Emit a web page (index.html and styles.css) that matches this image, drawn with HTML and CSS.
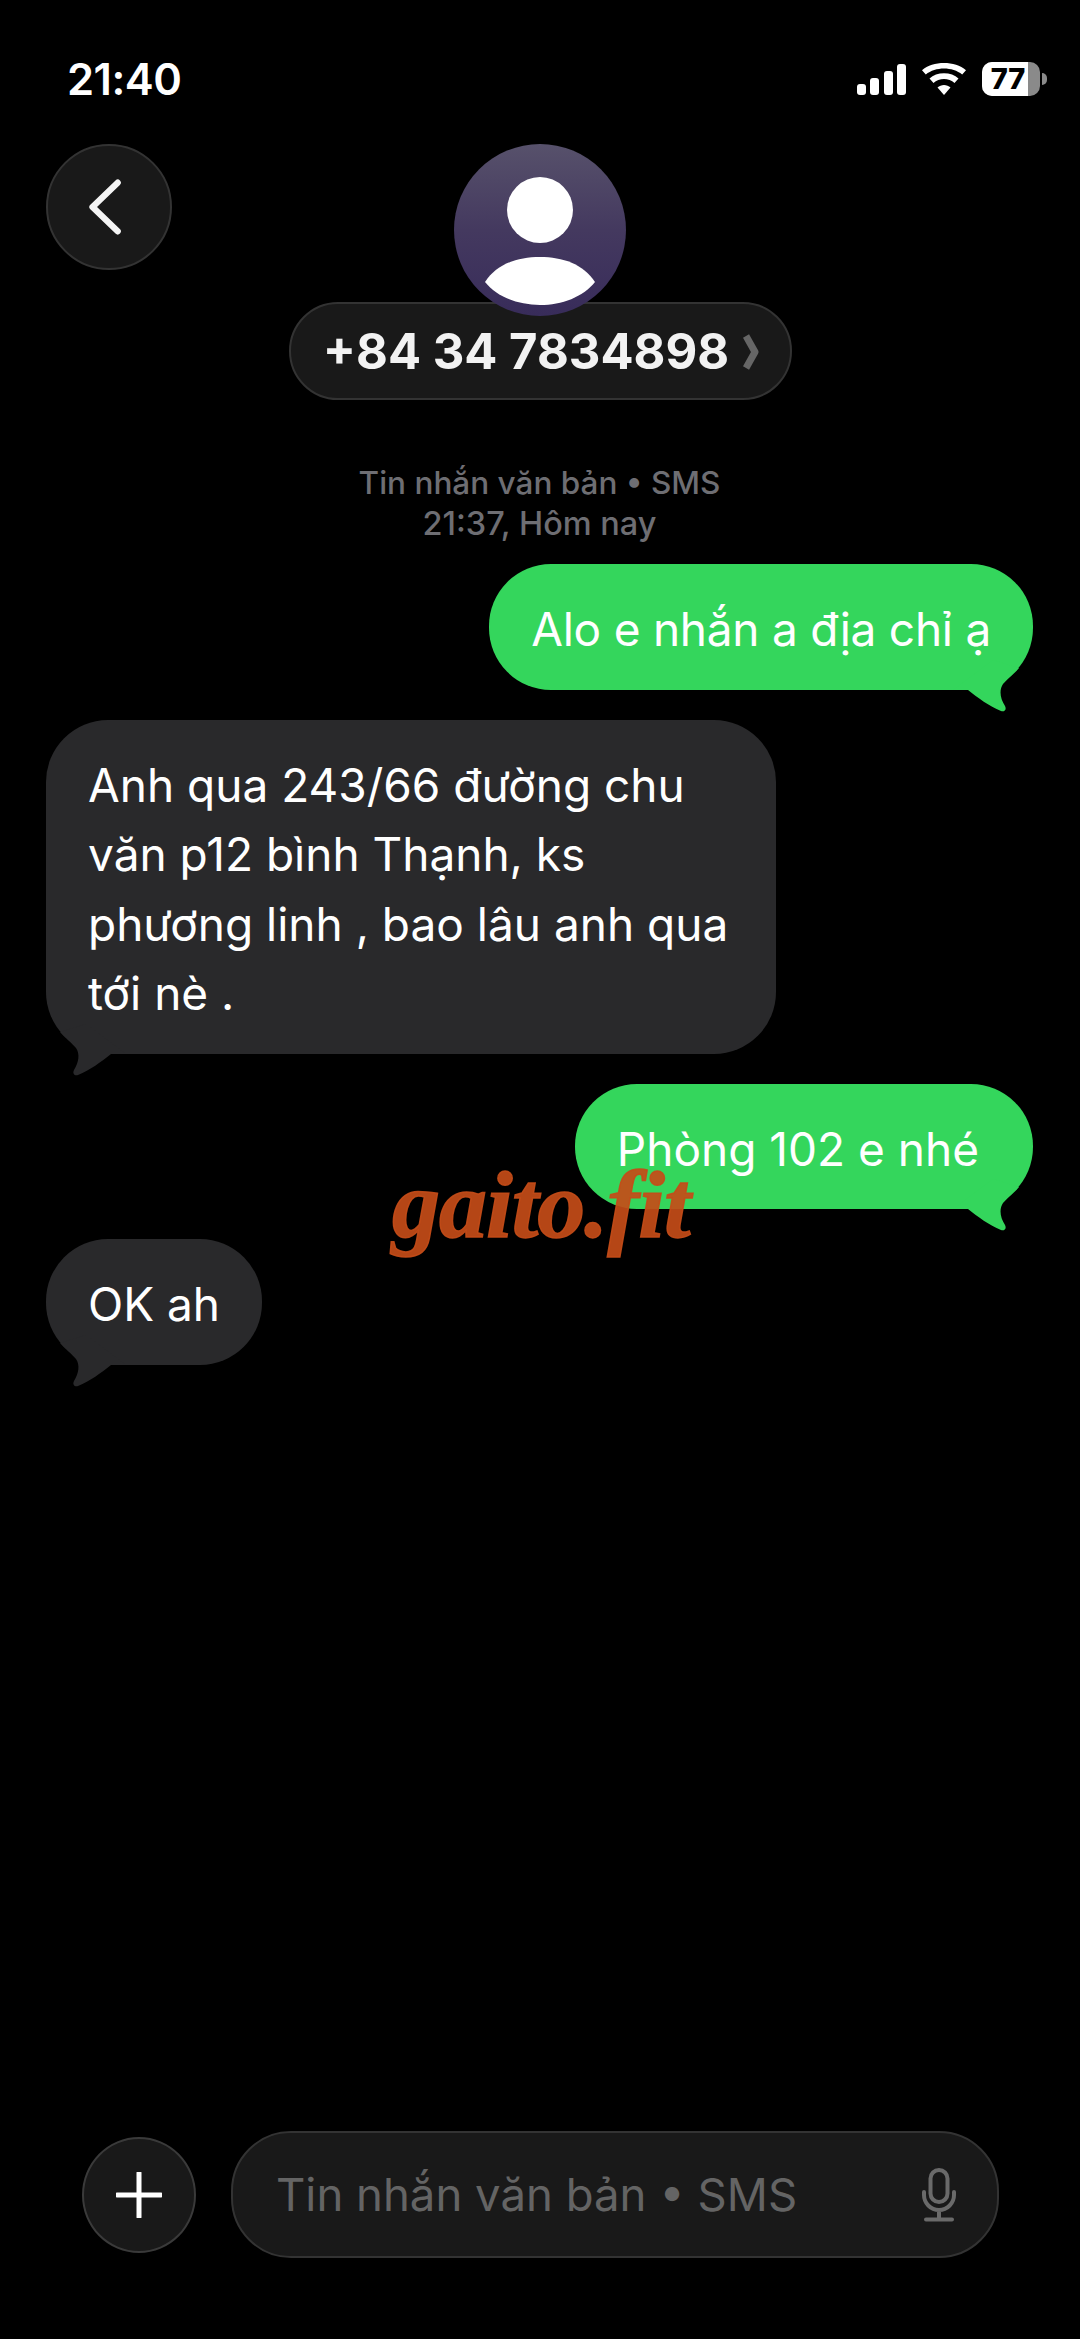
FILE: index.html
```html
<!DOCTYPE html>
<html lang="vi">
<head>
<meta charset="utf-8">
<title>SMS</title>
<link rel="stylesheet" href="styles.css">
</head>
<body>
<div class="screen">
  <header class="status">
    <span class="clock">21:40</span>
    <div class="status-icons">
      <svg class="signal" viewBox="0 0 49 31"><rect x="0" y="20" width="9" height="11" rx="3"/><rect x="13" y="14" width="9" height="17" rx="3"/><rect x="27" y="7" width="9" height="24" rx="3"/><rect x="40" y="0" width="9" height="31" rx="3"/></svg>
      <svg class="wifi" viewBox="0 0 44 32"><path d="M22 32 15.500 24.500C19 21 25 21 28.500 24.500Z"/><path d="M11.500 20 7.500 15.500C14.500 8.500 29.500 8.500 36.500 15.500L32.500 20C27 14.800 17 14.800 11.500 20Z"/><path d="M3.800 11.500 0 7.200C11 -2.400 33 -2.400 44 7.200L40.200 11.500C30.500 3.500 13.500 3.500 3.800 11.500Z"/></svg>
      <div class="battery"><div class="battery-body"><span class="battery-fill"></span><span class="battery-text">77</span></div><span class="battery-nub"></span></div>
    </div>
  </header>

  <nav class="nav">
    <button class="back" aria-label="Back">
      <svg viewBox="0 0 40 64" class="back-icon"><path d="M33 5 5 32l28 27"/></svg>
    </button>
    <div class="contact">
      <div class="avatar">
        <svg viewBox="0 0 172 172"><circle cx="86" cy="66" r="33"/><path d="M31 138C43 120 63 113 86 113s43 7 55 25C129 153 108 161 86 161s-43-8-55-23Z"/></svg>
      </div>
      <div class="name-pill">
        <span>+84 34 7834898</span>
        <svg class="pill-chevron" viewBox="0 0 16 36"><path d="M3 2 12 18 3 34"/></svg>
      </div>
    </div>
  </nav>

  <main class="thread">
    <p class="caption">Tin nhắn văn bản • SMS<br><span class="caption-time">21:37, Hôm nay</span></p>
    <div class="bubble sent tight">Alo e nhắn a địa chỉ ạ<svg class="tail" viewBox="-80 -40 80 64"><path d="M-80 0H-65C-55 8-44 16-32 21-29 22-26 20-28 16-33 8-34 0-30-6-26-11-20-15-14-22L-40-30Z"/></svg></div>
    <div class="bubble received wide">Anh qua 243/66 đường chu văn p12 bình Thạnh, ks phương linh , bao lâu anh qua tới nè .<svg class="tail" viewBox="-80 -40 80 64"><path d="M-80 0H-65C-55 8-44 16-32 21-29 22-26 20-28 16-33 8-34 0-30-6-26-11-20-15-14-22L-40-30Z"/></svg></div>
    <div class="bubble sent roomy">Phòng 102 e nhé<svg class="tail" viewBox="-80 -40 80 64"><path d="M-80 0H-65C-55 8-44 16-32 21-29 22-26 20-28 16-33 8-34 0-30-6-26-11-20-15-14-22L-40-30Z"/></svg></div>
    <div class="bubble received">OK ah<svg class="tail" viewBox="-80 -40 80 64"><path d="M-80 0H-65C-55 8-44 16-32 21-29 22-26 20-28 16-33 8-34 0-30-6-26-11-20-15-14-22L-40-30Z"/></svg></div>
    <span class="watermark">gaito.fit</span>
  </main>

  <footer class="composer">
    <button class="plus" aria-label="Add">
      <svg viewBox="0 0 46 46"><path d="M23 1v44M1 23h44"/></svg>
    </button>
    <div class="field">
      <span class="placeholder">Tin nhắn văn bản • SMS</span>
      <svg class="mic" viewBox="0 0 36 54"><rect x="9.500" y="2" width="17" height="32" rx="8.500"/><path d="M3 24v3c0 8 6.500 15 15 15s15-7 15-15v-3M18 42v9M5 51.500h26"/></svg>
    </div>
  </footer>
</div>
</body>
</html>
```

FILE: styles.css
```css
* { box-sizing: border-box; }
html, body { margin: 0; padding: 0; background: #000; }
body { font-family: Inter, Roboto, "Noto Sans", sans-serif; color: #fff; }
.screen { width: 1080px; height: 2339px; display: flex; flex-direction: column; background: #000; overflow: hidden; }

.status { height: 144px; padding: 56px 33px 0 67px; display: flex; justify-content: space-between; align-items: flex-start; flex: none; }
.clock { font-size: 43.500px; line-height: 46px; font-weight: 600; letter-spacing: -0.5px; }
.status-icons { display: flex; align-items: center; gap: 16px; margin-top: 6px; }
.signal { width: 49px; height: 31px; fill: #fff; display: block; }
.wifi { width: 44px; height: 32px; fill: #fff; display: block; }
.battery { display: flex; align-items: center; gap: 2px; }
.battery-body { position: relative; width: 58px; height: 34px; border-radius: 10px; background: #8a8a8a; overflow: hidden; display: flex; align-items: center; justify-content: center; }
.battery-fill { position: absolute; left: 0; top: 0; bottom: 0; width: 46px; background: #fff; }
.battery-text { position: relative; color: #000; font-size: 29px; font-weight: 800; line-height: 34px; margin-right: 6px; }
.battery-nub { width: 5px; height: 12px; background: #8a8a8a; border-radius: 0 6px 6px 0; }

.nav { flex: none; height: 256px; padding-left: 46px; display: grid; grid-template-columns: 126px 1fr 126px; align-items: start; }
.back { width: 126px; height: 126px; border-radius: 50%; background: #191919; border: 2px solid #333; padding: 0; display: flex; align-items: center; justify-content: center; }
.back-icon { width: 36px; height: 58px; fill: none; stroke: #f4f4f4; stroke-width: 7; stroke-linecap: round; stroke-linejoin: round; margin-right: 6px; }
.contact { display: flex; flex-direction: column; align-items: center; margin-left: -46px; }
.avatar { position: relative; z-index: 1; width: 172px; height: 172px; border-radius: 50%; background: linear-gradient(#57516b, #44395f 50%, #382c5a); }
.avatar svg { display: block; width: 172px; height: 172px; fill: #fff; }
.name-pill { margin-top: -14px; width: 503px; height: 98px; border-radius: 49px; background: #191919; border: 2px solid #333; display: flex; align-items: center; justify-content: center; gap: 14px; font-size: 49px; font-weight: 700; color: #f2f2f2; padding-left: 2px; }
.pill-chevron { width: 16px; height: 38px; fill: none; stroke: #666; stroke-width: 7; stroke-linejoin: round; margin-top: 2px; }

.thread { position: relative; flex: 1; padding: 62px 47px 0 46px; display: flex; flex-direction: column; gap: 30px; }
.caption { margin: 0 -20px -10px; height: 82px; text-align: center; color: #6e6e73; font-size: 31.500px; line-height: 41px; font-weight: 500; }
.caption-time { font-size: 32.500px; }
.bubble { position: relative; font-size: 46px; line-height: 69.500px; padding: 31px 42px 25px; border-radius: 62px; max-width: 730px; width: fit-content; }
.bubble .tail { position: absolute; bottom: -24px; width: 80px; height: 64px; }
.sent { align-self: flex-end; background: #34d65c; color: #fff; }
.sent .tail { right: 0; fill: #34d65c; }
.tight { letter-spacing: -0.25px; }
.roomy { padding-right: 54px; }
.received { align-self: flex-start; background: #29292b; color: #fff; }
.received .tail { left: 0; transform: scaleX(-1); fill: #29292b; }
.wide { width: 730px; }
.watermark { position: absolute; left: 392px; top: 740px; font-family: "Liberation Serif", serif; font-style: italic; font-weight: 700; font-size: 96px; line-height: 130px; color: rgba(196, 76, 24, 0.92); letter-spacing: -1px; -webkit-text-stroke: 1.5px rgba(196, 76, 24, 0.92); }

.composer { flex: none; height: 208px; padding: 0 81px 0 82px; display: flex; align-items: flex-start; gap: 35px; }
.plus { width: 114px; height: 116px; margin-top: 6px; border-radius: 50%; background: #191919; border: 2px solid #3a3a3a; padding: 0; display: flex; align-items: center; justify-content: center; flex: none; }
.plus svg { width: 46px; height: 46px; fill: none; stroke: #fff; stroke-width: 5; stroke-linecap: round; }
.field { flex: 1; height: 127px; border-radius: 60px; background: #191919; border: 2px solid #333; display: flex; align-items: center; justify-content: space-between; padding: 0 40px 0 43px; }
.placeholder { font-size: 45.500px; color: #646464; line-height: 60px; }
.mic { width: 36px; height: 54px; fill: none; stroke: #6a6a6a; stroke-width: 4; stroke-linecap: round; }
```
